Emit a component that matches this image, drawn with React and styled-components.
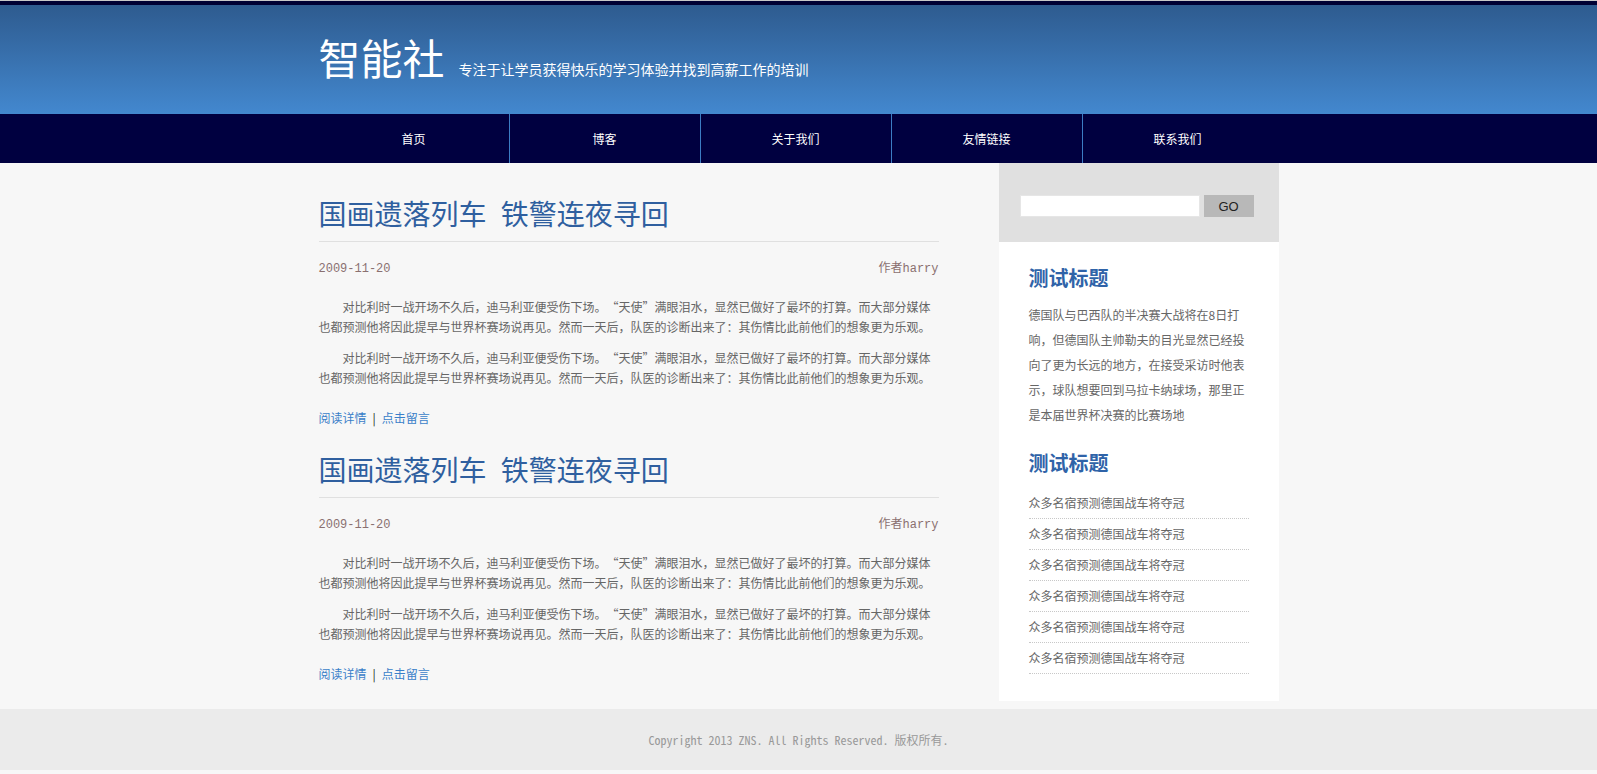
import styled, { createGlobalStyle } from 'styled-components';

const GlobalStyle = createGlobalStyle`
    body {
        margin: 0;
        background: #f7f7f7;
        font-family: "Noto Sans CJK SC", "Noto Sans", sans-serif;
        font-size: 12px;
        color: #666;
    }
    ul { margin: 0; padding: 0; list-style: none; }
    a { text-decoration: none; }
`

const navItems = ['首页', '博客', '关于我们', '友情链接', '联系我们'];
const news = Array(6).fill('众多名宿预测德国战车将夺冠');

const Paragraph = () => (
    <Para>
        对比利时一战开场不久后，迪马利亚便受伤下场。<Quote $open>“</Quote>天使<Quote>”</Quote>满眼泪水，显然已做好了最坏的打算。而大部分媒体也都预测他将因此提早与世界杯赛场说再见。然而一天后，队医的诊断出来了：其伤情比此前他们的想象更为乐观。
    </Para>
)

const Article = () => (
    <Post>
        <PostTitle>国画遗落列车 铁警连夜寻回</PostTitle>
        <Meta>
            <span>2009-11-20</span>
            <span>作者harry</span>
        </Meta>
        <Paragraph />
        <Paragraph />
        <Links>
            <LinkText href="#">阅读详情</LinkText>
            <Divider>|</Divider>
            <LinkText href="#">点击留言</LinkText>
        </Links>
    </Post>
)

const App = () => {
    return (
        <>
            <GlobalStyle />
            <Header>
                <HeaderInner>
                    <Logo>智能社</Logo>
                    <Slogan>专注于让学员获得快乐的学习体验并找到高薪工作的培训</Slogan>
                </HeaderInner>
            </Header>
            <Nav>
                <NavList>
                    {navItems.map((item, i) => (
                        <NavItem key={item} $first={i === 0}>{item}</NavItem>
                    ))}
                </NavList>
            </Nav>
            <Main>
                <Container>
                    <Content>
                        <Article />
                        <Article />
                    </Content>
                    <Sidebar>
                        <SearchBox>
                            <SearchInput type="text" />
                            <SearchButton>GO</SearchButton>
                        </SearchBox>
                        <Widgets>
                            <WidgetTitle>测试标题</WidgetTitle>
                            <WidgetText>德国队与巴西队的半决赛大战将在8日打响，但德国队主帅勒夫的目光显然已经投向了更为长远的地方，在接受采访时他表示，球队想要回到马拉卡纳球场，那里正是本届世界杯决赛的比赛场地</WidgetText>
                            <WidgetTitle $second>测试标题</WidgetTitle>
                            <NewsList>
                                {news.map((n, i) => <NewsItem key={i}>{n}</NewsItem>)}
                            </NewsList>
                        </Widgets>
                    </Sidebar>
                </Container>
            </Main>
            <Footer>Copyright 2013 ZNS. All Rights Reserved. 版权所有.</Footer>
        </>
    )
}

export default App

const Header = styled.header`
    height: 114px;
    box-sizing: border-box;
    padding-top: 36px;
    background: linear-gradient(to bottom, #c8c8c8 0, #c8c8c8 1px, #000033 1px, #000033 5px, #2e5b8f 5px, #4388cf 100%);
`
const HeaderInner = styled.div`
    width: 960px;
    margin: 0 auto;
    display: flex;
    align-items: baseline;
    color: #fff;
`
const Logo = styled.h1`
    margin: 0;
    font-size: 42px;
    font-weight: normal;
    line-height: 42px;
`
const Slogan = styled.p`
    margin: 0 0 0 14px;
    font-size: 14px;
`
const Nav = styled.nav`
    background: #000040;
`
const NavList = styled.ul`
    width: 960px;
    margin: 0 auto;
    display: flex;
`
const NavItem = styled.li`
    width: 190px;
    height: 49px;
    line-height: 49px;
    text-align: center;
    color: #fff;
    font-size: 12px;
    border-left: ${props => props.$first ? 'none' : '1px solid #3c7cc4'};
`
const Main = styled.main`
    background: #f7f7f7;
`
const Container = styled.div`
    width: 960px;
    margin: 0 auto;
    padding-bottom: 8px;
    display: flex;
    justify-content: space-between;
    align-items: flex-start;
`
const Content = styled.div`
    width: 620px;
    padding-top: 29px;
`
const Post = styled.article`
    margin-bottom: 20px;
    &:last-child { margin-bottom: 0; }
`
const PostTitle = styled.h2`
    margin: 0;
    padding-bottom: 7px;
    border-bottom: 1px solid #e0e0e0;
    font-size: 28px;
    line-height: 42px;
    font-weight: normal;
    word-spacing: 8px;
    color: #2f5f9f;
`
const Meta = styled.div`
    display: flex;
    justify-content: space-between;
    margin-top: 17px;
    line-height: 20px;
    font-family: "Liberation Mono", "Noto Sans CJK SC", monospace;
    font-size: 12px;
    color: #8a7070;
`
const Para = styled.p`
    margin: 18px 0 0;
    line-height: 20px;
    text-indent: 2em;
    & + & { margin-top: 11px; }
`
const Quote = styled.span`
    display: inline-block;
    width: 1em;
    text-indent: 0;
    text-align: ${props => props.$open ? 'right' : 'left'};
`
const Links = styled.div`
    margin-top: 20px;
    line-height: 20px;
`
const LinkText = styled.a`
    color: #3a7fc9;
`
const Divider = styled.span`
    margin: 0 6px;
    color: #222;
`
const Sidebar = styled.aside`
    width: 280px;
    background: #fff;
`
const SearchBox = styled.div`
    display: flex;
    align-items: center;
    gap: 4px;
    height: 79px;
    box-sizing: border-box;
    padding: 10px 20px 4px 21px;
    background: #e0e0e0;
`
const SearchInput = styled.input`
    width: 180px;
    height: 22px;
    box-sizing: border-box;
    border: 1px solid #e6e6e6;
    background: #fff;
    outline: none;
    margin: 0;
`
const SearchButton = styled.button`
    width: 50px;
    height: 22px;
    margin: 1px 0 0;
    padding: 0;
    border: none;
    background: #b8b8b8;
    color: #222;
    font-family: "Liberation Sans", Arial, sans-serif;
    font-size: 13px;
`
const Widgets = styled.div`
    padding: 22px 30px 27px;
`
const WidgetTitle = styled.h3`
    margin: ${props => props.$second ? '22px' : '0'} 0 10px;
    font-size: 20px;
    line-height: 28px;
    font-weight: bold;
    color: #2f63a8;
`
const WidgetText = styled.p`
    margin: 0;
    line-height: 25px;
    color: #666;
`
const NewsList = styled.ul`
    padding-top: 1px;
`
const NewsItem = styled.li`
    line-height: 30px;
    border-bottom: 1px dotted #c8c8c8;
    color: #666;
`
const Footer = styled.footer`
    height: 61px;
    line-height: 61px;
    margin-bottom: 4px;
    background: #ebebeb;
    text-align: center;
    font-family: "Noto Sans Mono CJK SC", "Liberation Mono", monospace;
    font-size: 12px;
    color: #999;
`
